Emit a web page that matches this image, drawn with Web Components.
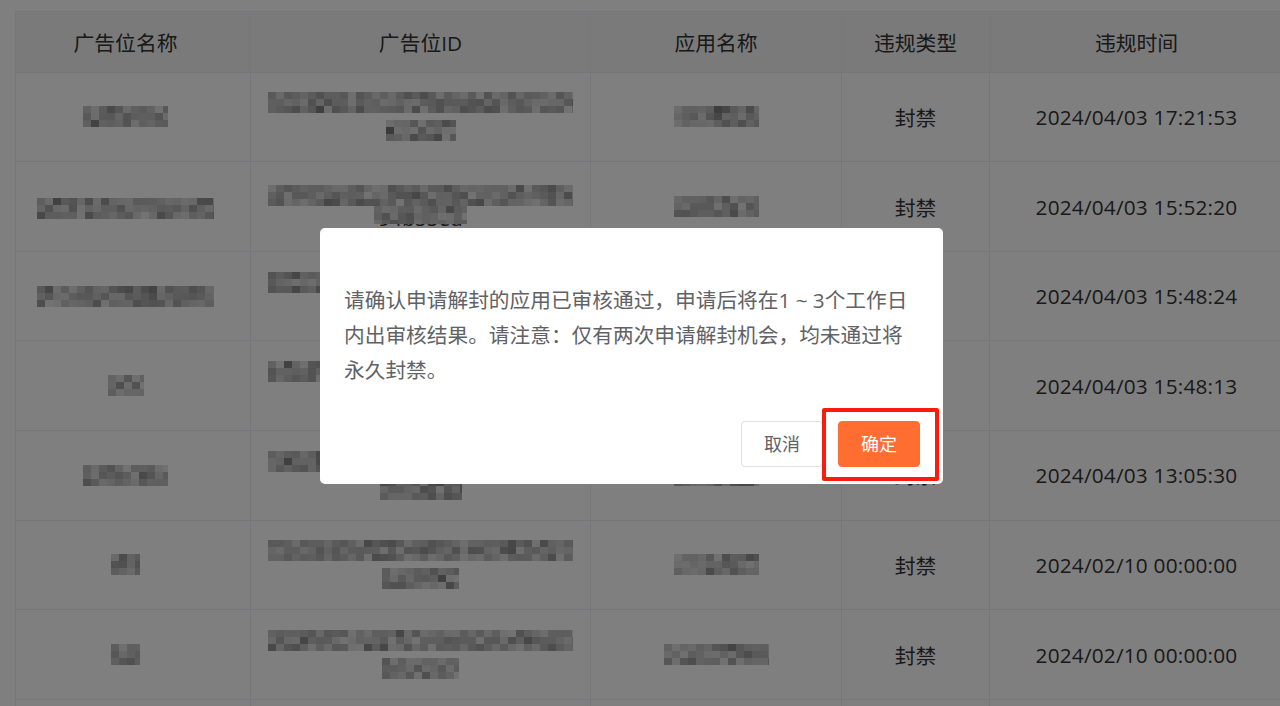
<!DOCTYPE html>
<html lang="zh-CN">
<head>
<meta charset="UTF-8">
<title>违规记录</title>
<style>
  html, body { height: 100%; }
  body {
    margin: 0;
    overflow: hidden;
    background: #fff;
    color: #333;
    font-family: "Open Sans", "Noto Sans CJK SC", sans-serif;
    font-size: 20.8px;
  }
</style>
</head>
<body>
<violation-table></violation-table>
<confirm-dialog>
  请确认申请解封的应用已审核通过，申请后将在1 ~ 3个工作日内出审核结果。请注意：仅有两次申请解封机会，均未通过将永久封禁。
</confirm-dialog>

<script>
// small seeded random so the mosaic looks the same on every load
function seeded(seed) {
  let s = seed * 2654435761 >>> 0;
  return function () {
    s = (s ^ (s << 13)) >>> 0;
    s = (s ^ (s >>> 17)) >>> 0;
    s = (s ^ (s << 5)) >>> 0;
    return s / 4294967296;
  };
}

// the blurred-out bits of the table (colours get halved by the dialog's backdrop)
class AdMosaic extends HTMLElement {
  connectedCallback() {
    let w = +this.getAttribute("w");
    let h = +this.getAttribute("h") || 21;
    let seed = +this.getAttribute("seed") || 1;
    let rows = Math.ceil(h / 7);
    let cols = Math.ceil(w / 8);
    let rnd = seeded(seed + w + h);
    let cells = "";
    for (let i = 0; i < rows * cols; i++) {
      let v = Math.round(232 - rnd() * 50 - rnd() * rnd() * 70);
      cells += `<i style="background:rgb(${v},${v},${v + 2})"></i>`;
    }
    let root = this.attachShadow({ mode: "open" });
    root.innerHTML = `<style>
      :host { display: block; width: ${w}px; height: ${h}px; overflow: hidden; flex: none; }
      div {
        display: grid;
        grid-template-columns: repeat(${cols}, 8px);
        grid-auto-rows: 7px;
        filter: blur(.5px);
      }
    </style><div>${cells}</div>`;
  }
}
customElements.define("ad-mosaic", AdMosaic);

const tableTemplate = document.createElement("template");
tableTemplate.innerHTML = `<style>
  :host {
    display: grid;
    grid-template-columns: 235px 340px 251px 148px 294px;
    grid-template-rows: 60.7px;
    grid-auto-rows: 89.6px;
    width: 1269px;
    margin: 11px 0 0 15px;
    border-top: 1px solid #ebeef5;
    border-left: 1px solid #ebeef5;
    box-sizing: border-box;
    text-align: center;
  }
  .cell {
    display: flex;
    flex-direction: column;
    align-items: center;
    justify-content: center;
    gap: 7px;
    border-right: 1px solid #ebeef5;
    border-bottom: 1px solid #ebeef5;
    box-sizing: border-box;
    min-width: 0;
  }
  .head { background: #f5f5f5; }
  .first { padding-right: 15px; }
  .low { padding-top: 4px; }
  .tight { gap: 0; }
  .time { letter-spacing: .2px; }
  /* bottom edge of the id that sticks out under the mosaic */
  .tail { height: 5px; overflow: hidden; line-height: 28px; }
  .tail span { display: block; margin-top: -20px; }
</style>`;

// id cell: [width of first line, width of second line]
const mosaicRows = [
  { name: 85, id: [305, 70], app: 85, time: "2024/04/03 17:21:53" },
  { name: 177, id: [305, 93], idH: 18, app: 85, time: "2024/04/03 15:52:20", tail: "94b55ed", low: true },
  { name: 177, id: [305, 70], app: 85, time: "2024/04/03 15:48:24" },
  { name: 36, id: [305, 70], app: 85, time: "2024/04/03 15:48:13" },
  { name: 85, id: [305, 82], app: 85, time: "2024/04/03 13:05:30" },
  { name: 29, id: [305, 77], app: 85, time: "2024/02/10 00:00:00" },
  { name: 29, id: [305, 77], app: 105, time: "2024/02/10 00:00:00" },
];

class ViolationTable extends HTMLElement {
  connectedCallback() {
    let root = this.attachShadow({ mode: "open" });
    root.appendChild(tableTemplate.content.cloneNode(true));
    let html = "";
    ["广告位名称", "广告位ID", "应用名称", "违规类型", "违规时间"].forEach(function (t, i) {
      html += `<div class="cell head${i == 0 ? " first" : ""}">${t}</div>`;
    });
    mosaicRows.forEach(function (r, i) {
      let low = r.low ? " low" : "";
      let tight = r.tail ? " tight" : "";
      html += `<div class="cell first${low}"><ad-mosaic w="${r.name}" seed="${i + 11}"></ad-mosaic></div>`;
      html += `<div class="cell${tight}"><ad-mosaic w="${r.id[0]}" seed="${i + 31}"></ad-mosaic>` +
              `<ad-mosaic w="${r.id[1]}" h="${r.idH || 21}" seed="${i + 51}"></ad-mosaic>` +
              (r.tail ? `<div class="tail"><span>${r.tail}</span></div>` : "") + `</div>`;
      html += `<div class="cell"><ad-mosaic w="${r.app}" seed="${i + 71}"></ad-mosaic></div>`;
      html += `<div class="cell">封禁</div>`;
      html += `<div class="cell time">${r.time}</div>`;
    });
    for (let i = 0; i < 5; i++) html += `<div class="cell"></div>`;
    root.innerHTML += html;
  }
}
customElements.define("violation-table", ViolationTable);

const buttonTemplate = document.createElement("template");
buttonTemplate.innerHTML = `<style>
  :host {
    display: flex;
    align-items: center;
    justify-content: center;
    width: 82px;
    height: 46px;
    box-sizing: border-box;
    border: 1px solid #dcdfe6;
    border-radius: 4px;
    background: #fff;
    color: #606266;
    font-size: 18px;
  }
  :host([primary]) {
    border-color: #ff6e30;
    background: #ff6e30;
    color: #fff;
  }
</style><slot></slot>`;

class DialogButton extends HTMLElement {
  connectedCallback() {
    this.attachShadow({ mode: "open" }).appendChild(buttonTemplate.content.cloneNode(true));
  }
}
customElements.define("dialog-button", DialogButton);

const dialogTemplate = document.createElement("template");
dialogTemplate.innerHTML = `<style>
  :host {
    position: fixed;
    inset: 0;
    display: flex;
    justify-content: flex-start;
    align-items: flex-start;
    background: rgba(0, 0, 0, .5);
    padding: 228px 0 0 320px;
    box-sizing: border-box;
  }
  .box {
    position: relative;
    width: 623px;
    height: 256px;
    box-sizing: border-box;
    padding: 55px 23px 17px 24px;
    display: flex;
    flex-direction: column;
    justify-content: space-between;
    background: #fff;
    border-radius: 5px;
    color: #606266;
    font-size: 20.7px;
    line-height: 35px;
  }
  .text { width: 570px; }
  .foot {
    display: flex;
    justify-content: flex-end;
    gap: 15px;
  }
  /* annotation drawn over the screenshot */
  .mark {
    position: absolute;
    left: 502px;
    top: 180px;
    width: 117px;
    height: 73px;
    box-sizing: border-box;
    border: 4px solid #ff1a10;
    border-radius: 2px;
  }
</style>
<div class="box">
  <div class="text"><slot></slot></div>
  <div class="foot">
    <dialog-button>取消</dialog-button>
    <dialog-button primary>确定</dialog-button>
  </div>
  <div class="mark"></div>
</div>`;

class ConfirmDialog extends HTMLElement {
  connectedCallback() {
    this.attachShadow({ mode: "open" }).appendChild(dialogTemplate.content.cloneNode(true));
  }
}
customElements.define("confirm-dialog", ConfirmDialog);
</script>
</body>
</html>
